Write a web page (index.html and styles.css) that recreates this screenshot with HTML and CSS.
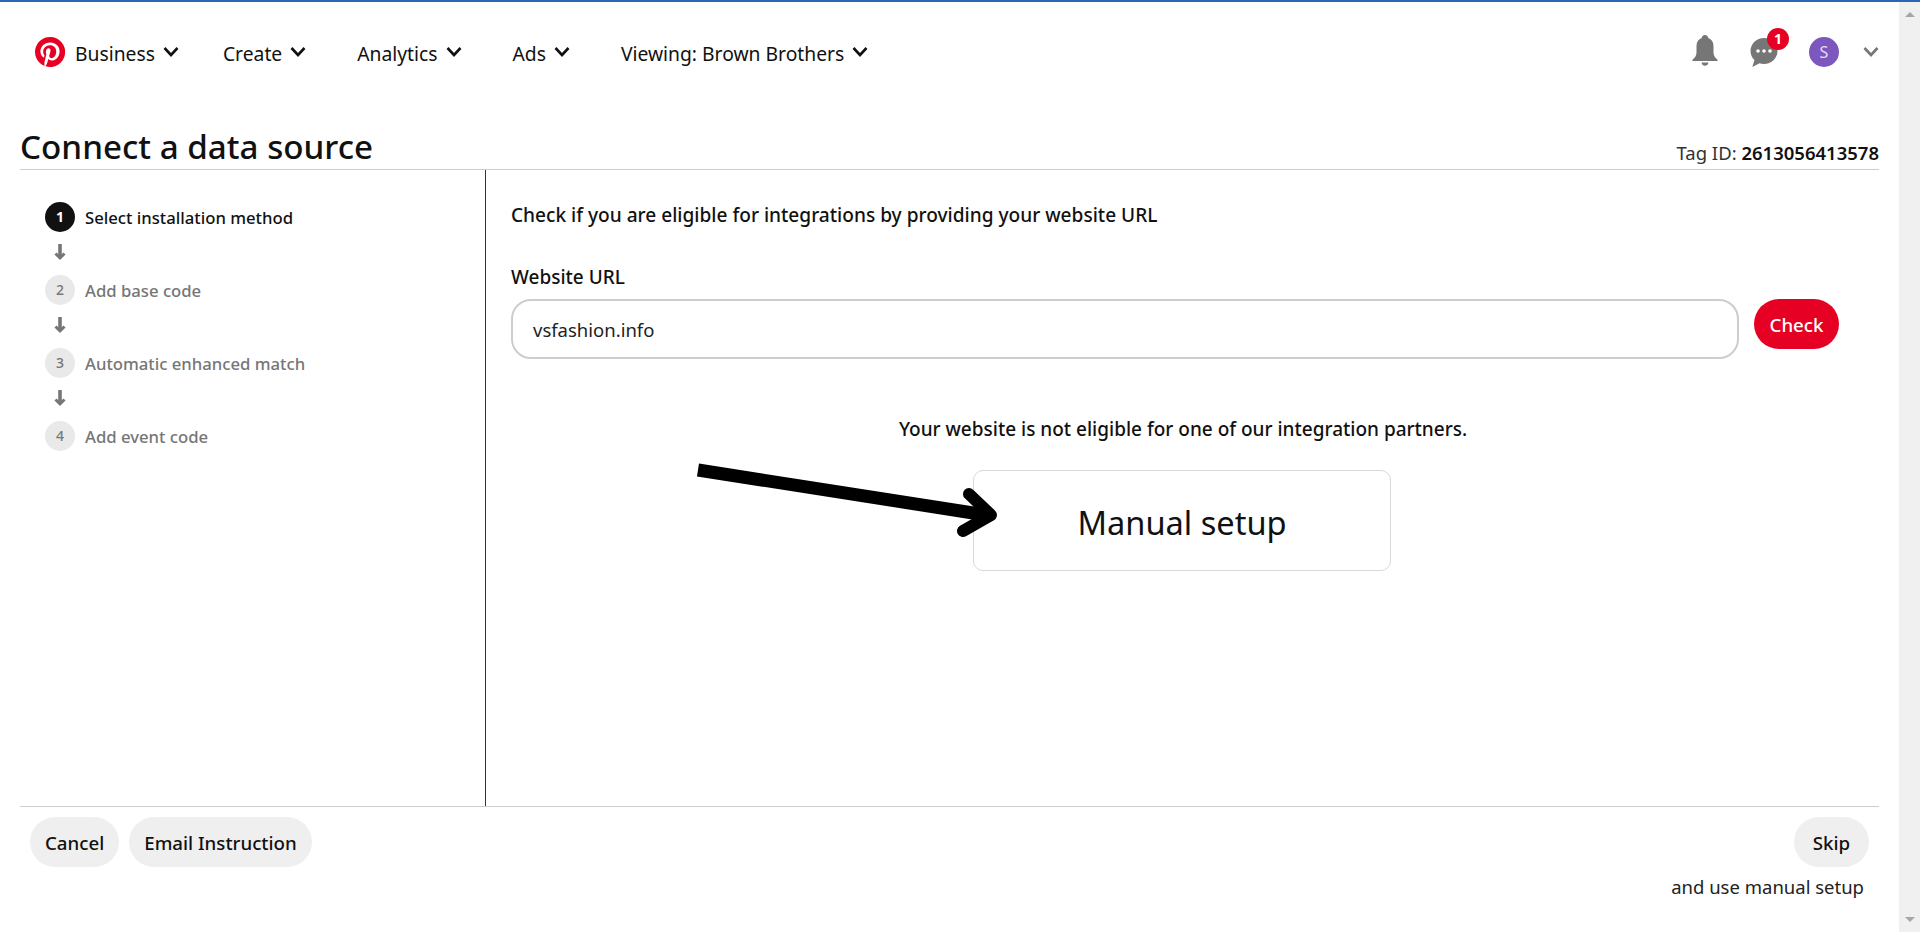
FILE: index.html
```html
<!DOCTYPE html>
<html lang="en">
<head>
<meta charset="utf-8">
<title>Connect a data source</title>
<link rel="stylesheet" href="styles.css">
</head>
<body>
<div class="page">
  <div class="main">
    <nav class="nav">
      <svg class="logo" viewBox="0 0 24 24"><circle cx="12" cy="12" r="11.500" fill="#fff"/><path fill="#e60023" d="M12 0a12 12 0 0 0-4.370 23.170c-.1-.95-.2-2.400.04-3.440l1.400-5.960s-.35-.72-.35-1.780c0-1.670.96-2.910 2.170-2.910 1.020 0 1.520.77 1.520 1.690 0 1.030-.65 2.560-.99 3.980-.28 1.190.6 2.160 1.780 2.160 2.130 0 3.770-2.250 3.770-5.490 0-2.870-2.060-4.880-5.010-4.880-3.410 0-5.410 2.560-5.410 5.200 0 1.030.4 2.130.89 2.730.1.120.11.22.08.34l-.33 1.360c-.05.22-.18.27-.41.16-1.500-.7-2.430-2.890-2.430-4.650 0-3.780 2.750-7.260 7.920-7.260 4.160 0 7.390 2.970 7.390 6.920 0 4.130-2.610 7.460-6.220 7.460-1.210 0-2.360-.63-2.750-1.380l-.75 2.850c-.27 1.040-1 2.350-1.490 3.150A12 12 0 1 0 12 0z"/></svg>
      <a class="nav-item nav-first">Business<svg class="chev" viewBox="0 0 16 12"><path d="M1.500 2l6.500 7 6.500-7"/></svg></a>
      <a class="nav-item">Create<svg class="chev" viewBox="0 0 16 12"><path d="M1.500 2l6.500 7 6.500-7"/></svg></a>
      <a class="nav-item">Analytics<svg class="chev" viewBox="0 0 16 12"><path d="M1.500 2l6.500 7 6.500-7"/></svg></a>
      <a class="nav-item">Ads<svg class="chev" viewBox="0 0 16 12"><path d="M1.500 2l6.500 7 6.500-7"/></svg></a>
      <a class="nav-item">Viewing: Brown Brothers<svg class="chev" viewBox="0 0 16 12"><path d="M1.500 2l6.500 7 6.500-7"/></svg></a>
      <div class="nav-right">
        <svg class="bell" viewBox="0 0 26 32"><path fill="#767676" d="M13 0c-2 0-3.200 1.400-3.300 3.100C6.300 4.300 4.500 7.300 4.500 11v6.500c0 3-1.500 5-3.800 7-.8.800-.5 1.500.5 1.500h23.600c1 0 1.300-.7.500-1.500-2.300-2-3.800-4-3.800-7V11c0-3.700-1.800-6.700-5.200-7.900C16.200 1.400 15 0 13 0z"/><path fill="#767676" d="M9.500 27.500h7c-.3 2-1.700 3.300-3.500 3.300s-3.200-1.300-3.500-3.300z"/></svg>
        <div class="chat">
          <svg class="chat-icon" viewBox="0 0 28 30"><path fill="#767676" d="M14 1C6.500 1 .5 6.900.5 14c0 3.600 1.500 6.800 4 9.100L2.300 30l7.200-3.800c1.400.5 2.900.8 4.500.8 7.500 0 13.500-5.800 13.500-13S21.500 1 14 1z"/><circle cx="8" cy="14" r="1.800" fill="#fff"/><circle cx="14" cy="14" r="1.800" fill="#fff"/><circle cx="20" cy="14" r="1.800" fill="#fff"/></svg>
          <span class="badge">1</span>
        </div>
        <span class="avatar">S</span>
        <svg class="chev chev-grey" viewBox="0 0 16 12"><path d="M1.500 2l6.500 7 6.500-7"/></svg>
      </div>
    </nav>

    <header class="head">
      <h1 class="title">Connect a data source</h1>
      <div class="tag">Tag ID: <b class="tag-id">2613056413578</b></div>
    </header>

    <div class="body">
      <aside class="side">
        <div class="step step-on"><span class="num">1</span>Select installation method</div>
        <svg class="down" viewBox="0 0 14 18"><path class="down-stem" d="M7 1v14"/><path d="M2.500 10.500L7 15l4.500-4.500"/></svg>
        <div class="step"><span class="num">2</span>Add base code</div>
        <svg class="down" viewBox="0 0 14 18"><path class="down-stem" d="M7 1v14"/><path d="M2.500 10.500L7 15l4.500-4.500"/></svg>
        <div class="step"><span class="num">3</span>Automatic enhanced match</div>
        <svg class="down" viewBox="0 0 14 18"><path class="down-stem" d="M7 1v14"/><path d="M2.500 10.500L7 15l4.500-4.500"/></svg>
        <div class="step"><span class="num">4</span>Add event code</div>
      </aside>
      <section class="content">
        <p class="lead">Check if you are eligible for integrations by providing your website URL</p>
        <label class="label">Website URL</label>
        <div class="url-row">
          <div class="input">vsfashion.info</div>
          <button class="btn btn-red">Check</button>
        </div>
        <p class="note">Your website is not eligible for one of our integration partners.</p>
        <div class="manual">Manual setup</div>
        <svg class="pointer" viewBox="0 0 320 90"><path d="M8 11L296 56" stroke-width="13"/><path d="M279 35l22 21-28 16" stroke-width="12" stroke-linecap="round" stroke-linejoin="round"/></svg>
      </section>
    </div>

    <footer class="foot">
      <div class="foot-left">
        <button class="btn">Cancel</button>
        <button class="btn">Email Instruction</button>
      </div>
      <div class="foot-right">
        <button class="btn btn-skip">Skip</button>
        <span class="skip-note">and use manual setup</span>
      </div>
    </footer>
  </div>
  <div class="scrollbar"><i class="tri tri-up"></i><i class="tri tri-down"></i></div>
</div>
</body>
</html>
```

FILE: styles.css
```css
* { box-sizing: border-box; }
html, body { margin: 0; height: 100%; overflow: hidden; background: #fff; }
body { font-family: "Noto Sans", "Open Sans", sans-serif; color: #111; border-top: 2px solid #2b66b0; }
.page { display: flex; height: 930px; }
.main { flex: 1; min-width: 0; display: flex; flex-direction: column; padding: 0 20px; }

.nav { height: 104px; display: flex; align-items: center; padding: 0 0 0 15px; font-size: 19.300px; flex: none; }
.logo { width: 30px; height: 30px; flex: none; margin-top: -4px; }
.nav-item { display: flex; align-items: center; margin-left: 51px; padding-bottom: 2px; white-space: nowrap; }
.nav-first { margin-left: 10px; }
.nav-first + .nav-item { margin-left: 44px; }
.chev { width: 16px; height: 12px; margin-left: 8px; margin-top: -3px; fill: none; stroke: #111; stroke-width: 2.600; }
.nav-right { margin-left: auto; display: flex; align-items: center; }
.bell { width: 26px; height: 32px; margin-top: -6px; }
.chat { position: relative; margin-left: 32px; width: 28px; height: 30px; margin-top: -4px; }
.chat-icon { width: 28px; height: 30px; display: block; }
.badge { position: absolute; top: -9px; right: -11px; width: 22px; height: 22px; border-radius: 50%; background: #e60023; color: #fff; font: 700 14px/22px "Noto Sans", sans-serif; text-align: center; }
.avatar { width: 30px; height: 30px; border-radius: 50%; background: #7c57bd; color: #e6dcf5; font-size: 16px; line-height: 30px; text-align: center; margin-left: 31px; margin-top: -4px; }
.chev-grey { stroke: #767676; margin-left: 24px; margin-top: -4px; }

.head { display: flex; justify-content: space-between; align-items: flex-end; height: 64px; border-bottom: 1px solid #cdcdcd; flex: none; }
.title { margin: 0; font-size: 33.200px; font-weight: 500; line-height: 44px; margin-bottom: 0; }
.tag { font-size: 18.500px; line-height: 24px; color: #333; margin-bottom: 4px; }
.tag-id { font-weight: 600; color: #111; }

.body { flex: 1; display: flex; min-height: 0; }
.side { width: 466px; flex: none; border-right: 1px solid #333; padding: 32px 0 0 25px; }
.step { display: flex; align-items: center; height: 30px; font-size: 16.700px; color: #767676; font-weight: 500; white-space: nowrap; }
.step-on { color: #111; }
.num { width: 30px; height: 30px; border-radius: 50%; background: #e9e9e9; color: #767676; font-size: 14px; line-height: 30px; text-align: center; margin-right: 10px; flex: none; }
.step-on .num { background: #111; color: #fff; font-weight: 700; }
.down { display: block; width: 14px; height: 18px; margin: 11px 0 14px 8px; fill: none; stroke: #767676; stroke-width: 3; }
.down-stem { stroke-width: 3.600; }

.content { position: relative; flex: 1; padding: 0 24px 0 25px; display: flex; flex-direction: column; }
.lead { margin: 33px 0 0; font-size: 19.100px; line-height: 24px; font-weight: 500; }
.label { margin-top: 38px; font-size: 19px; line-height: 24px; font-weight: 500; }
.url-row { display: flex; align-items: flex-start; margin: 10px 16px 0 0; gap: 15px; }
.input { flex: 1; height: 60px; border: 2px solid #cdcdcd; border-radius: 20px; padding: 0 20px; font-size: 18.500px; line-height: 58px; color: #222; }
.btn { border: 0; height: 50px; padding: 2px 15px 0; border-radius: 25px; background: #efefef; color: #111; font: 500 18.700px/24px "Noto Sans", sans-serif; white-space: nowrap; }
.btn-red { background: #e60023; color: #fff; width: 85px; padding: 2px 0 0; }
.btn-skip { width: 75px; padding: 2px 0 0; }
.note { margin: 58px 0 0; text-align: center; font-size: 19px; line-height: 24px; font-weight: 500; }
.manual { align-self: center; width: 418px; height: 101px; margin: 29px 2px 0 0; border: 1px solid #d9d9d9; border-radius: 10px; font-size: 32.600px; line-height: 104px; text-align: center; color: #111; }
.pointer { position: absolute; left: 204px; top: 289px; width: 320px; height: 90px; fill: none; stroke: #000; }

.foot { flex: none; height: 126px; border-top: 1px solid #cdcdcd; display: flex; justify-content: space-between; padding: 10px 10px 0; }
.foot-left { display: flex; gap: 10px; align-items: flex-start; }
.foot-right { display: flex; flex-direction: column; align-items: flex-end; }
.skip-note { font-size: 18.500px; line-height: 24px; margin-top: 8px; color: #222; margin-right: 5px; }

.scrollbar { width: 21px; flex: none; background: #f0f0f0; display: flex; flex-direction: column; justify-content: space-between; align-items: center; padding: 10px 0; }
.tri { width: 0; height: 0; border-left: 5px solid transparent; border-right: 5px solid transparent; }
.tri-up { border-bottom: 5px solid #a6a6a6; }
.tri-down { border-top: 5px solid #a6a6a6; }
```
